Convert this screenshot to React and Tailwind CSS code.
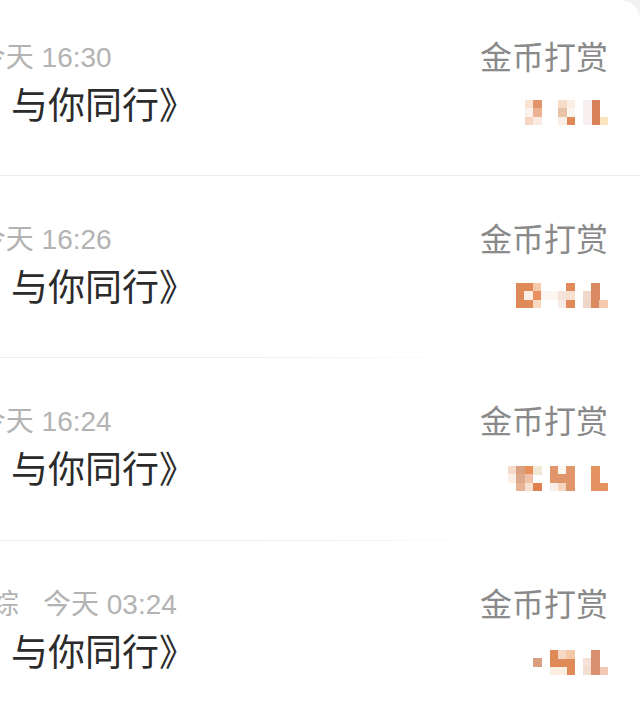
import React from 'react';

const FONT = "font-['Liberation_Sans','Noto_Sans_CJK_SC',sans-serif]";
const CELL = 25 / 3;

// pixelated (mosaic) reward amounts, [col, row, colour]
const mosaics = [
  {
    cols: 10,
    cells: [
      [0, 0, '#fbe3d3'], [1, 0, '#e0956a'], [0, 1, '#fcf1ea'], [1, 1, '#ebb191'],
      [0, 2, '#f6d6c2'], [1, 2, '#fbeadf'],
      [4, 0, '#f5dcc8'], [5, 0, '#fbeee4'], [4, 1, '#e8c3a8'], [5, 1, '#fdf6f0'],
      [4, 2, '#fbeee6'], [5, 2, '#e08858'],
      [7, 0, '#f9eef0'], [7, 1, '#f9eef0'], [7, 2, '#f9eef0'],
      [8, 0, '#d9825a'], [8, 1, '#d9825a'], [8, 2, '#d9825a'], [9, 2, '#fbe3c0'],
    ],
  },
  {
    cols: 11,
    cells: [
      [0, 0, '#e08a5a'], [1, 0, '#e08a5a'], [2, 0, '#f6c9a8'],
      [0, 1, '#e08a5a'], [1, 1, '#fbeee5'], [2, 1, '#e89060'],
      [0, 2, '#e08a5a'], [1, 2, '#e08a5a'], [2, 2, '#fad8c0'],
      [3, 1, '#fcf5f0'], [4, 1, '#fcf5f0'],
      [5, 1, '#f3e3da'], [5, 2, '#f6ebe5'],
      [6, 0, '#e08a5a'], [6, 1, '#f8e0d0'], [6, 2, '#e08a5a'],
      [8, 1, '#efd8c8'], [8, 2, '#efd5c5'],
      [9, 0, '#d98a60'], [9, 1, '#d98a60'], [9, 2, '#d98a60'], [10, 2, '#f5c8b0'],
    ],
  },
  {
    cols: 12,
    cells: [
      [0, 0, '#f6d9c8'], [1, 0, '#dba080'], [2, 0, '#e8905a'], [3, 0, '#f1e9d6'],
      [0, 1, '#fbefe8'], [1, 1, '#dea88a'], [2, 1, '#f0c0a8'],
      [1, 2, '#e8b394'], [2, 2, '#f6e0d2'], [3, 2, '#e08050'],
      [5, 0, '#e0956a'], [5, 1, '#e0956a'], [5, 2, '#fbeee6'],
      [6, 0, '#fdf7f2'], [6, 1, '#e0956a'], [6, 2, '#f5d5c0'],
      [7, 0, '#e0956a'], [7, 1, '#e0956a'], [7, 2, '#e0956a'],
      [10, 0, '#e39260'], [10, 1, '#e39260'], [10, 2, '#e39260'], [11, 2, '#e39260'],
    ],
  },
  {
    cols: 9,
    cells: [
      [0, 1, '#d9a080'],
      [2, 0, '#e08a5a'], [2, 1, '#e08a5a'], [3, 1, '#e08a5a'], [4, 1, '#e08a5a'], [4, 2, '#e08a5a'],
      [3, 0, '#f6d8c5'], [4, 0, '#f5c8a8'], [2, 2, '#fbefe2'], [3, 2, '#fbefe2'],
      [6, 1, '#f6e2d6'], [6, 2, '#f3dcd0'],
      [7, 0, '#d99070'], [7, 1, '#d99070'], [7, 2, '#d99070'], [8, 2, '#f1c9b6'],
    ],
  },
];

const rows = [
  { name: 'Ryan102938', time: '今天 16:30', top: 'pt-[38px]', gap: 'mt-[22px]' },
  { name: 'Ryan520131', time: '今天 16:26', top: 'pt-[44px]', gap: 'mt-[23px]' },
  { name: 'Ryan886623', time: '今天 16:24', top: 'pt-[44px]', gap: 'mt-[24px]' },
  { name: '爱看小说的林小综', time: '今天 03:24', top: 'pt-[44px]', gap: 'mt-[25px]' },
];

const Mosaic = ({ cols, cells }) => (
  <svg width={cols * CELL} height={3 * CELL} shapeRendering="crispEdges">
    {cells.map(([c, r, fill], i) => (
      <rect key={i} x={c * CELL} y={r * CELL} width={CELL + 0.3} height={CELL + 0.3} fill={fill} />
    ))}
  </svg>
);

const RewardRow = ({ row, mosaic, height }) => (
  <div className={`flex overflow-hidden ${row.top} ${height}`}>
    <div className="flex-1 min-w-0 whitespace-nowrap">
      <div className="-ml-[205px] text-[28px] leading-[40px] text-[#b3b3b3]">
        <span>{row.name}</span>
        <span className="ml-6">{row.time}</span>
      </div>
      <div className="-ml-[211px] mt-1 text-[37px] leading-[50px] text-[#2b2b2b]">《一路星光，与你同行》</div>
    </div>
    <div className="flex flex-col items-end pr-8 shrink-0">
      <div className="text-[32px] leading-[40px] text-[#8a8a8a]">金币打赏</div>
      <div className={row.gap}>
        <Mosaic {...mosaic} />
      </div>
    </div>
  </div>
);

export default function App() {
  return (
    <div className={`h-[701px] overflow-hidden bg-[#f2f2f2] ${FONT}`}>
      <div className="h-full bg-white rounded-tr-[20px]">
        <RewardRow row={rows[0]} mosaic={mosaics[0]} height="h-[175px]" />
        <div className="h-px bg-[#ebebeb]" />
        <RewardRow row={rows[1]} mosaic={mosaics[1]} height="h-[181px]" />
        <div className="h-px w-[480px] bg-linear-to-r from-[#eeeeee] via-[#eeeeee] to-transparent" />
        <RewardRow row={rows[2]} mosaic={mosaics[2]} height="h-[182px]" />
        <div className="h-px w-[500px] bg-linear-to-r from-[#ececec] via-[#ececec] to-transparent" />
        <RewardRow row={rows[3]} mosaic={mosaics[3]} height="h-[180px]" />
      </div>
    </div>
  );
}
